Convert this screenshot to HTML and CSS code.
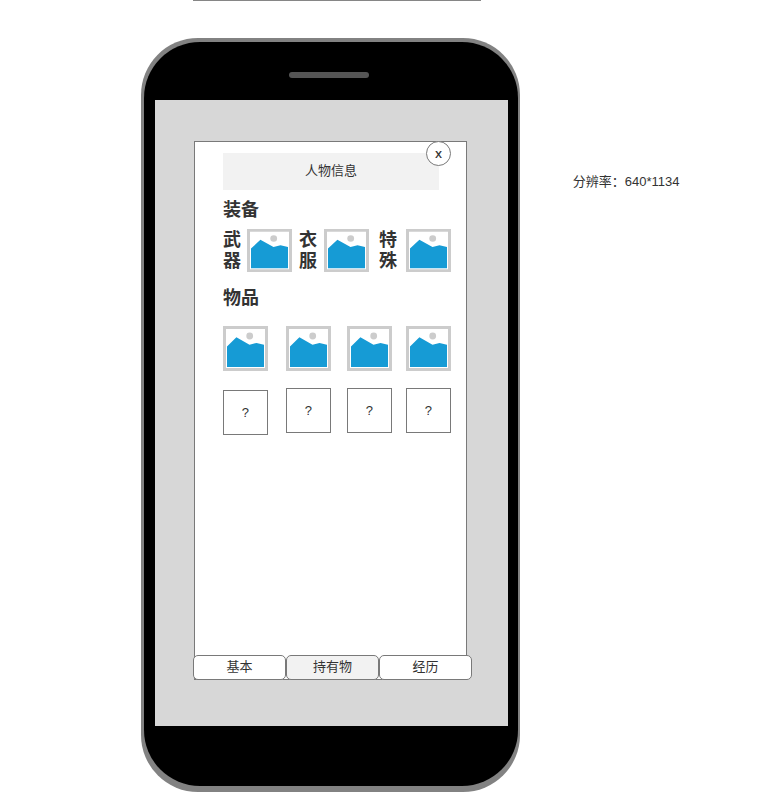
FILE: index.html
```html
<!DOCTYPE html>
<html lang="zh-CN">
<head>
<meta charset="utf-8">
<title>人物信息</title>
<link rel="stylesheet" href="styles.css">
</head>
<body>
<svg class="defs" aria-hidden="true">
  <symbol id="pic" viewBox="0 0 45 45" preserveAspectRatio="none">
    <path fill="#ccc" d="M0 0H45V45H0Z"/>
    <path fill="#fff" d="M3 3H42V42H3Z"/>
    <circle cx="26.7" cy="10" r="3.4" fill="#ccc"/>
    <path fill="#169bd5" d="M4 20.5L13.4 11.3L26.5 18.8L33.5 16.9L41 18.8V41H4Z"/>
  </symbol>
</svg>
<div class="previous"></div>
<main class="canvas">
  <div class="phone">
    <div class="body">
      <div class="speaker"></div>
      <div class="screen">
        <section class="panel">
          <button class="close">x</button>
          <header class="title">人物信息</header>
          <h2 class="heading">装备</h2>
          <div class="equipment">
            <h3 class="slot">武器</h3><svg class="pic"><use href="#pic"/></svg>
            <h3 class="slot">衣服</h3><svg class="pic"><use href="#pic"/></svg>
            <h3 class="slot">特殊</h3><svg class="pic"><use href="#pic"/></svg>
          </div>
          <h2 class="heading items-heading">物品</h2>
          <div class="items">
            <svg class="item"><use href="#pic"/></svg>
            <svg class="item"><use href="#pic"/></svg>
            <svg class="item"><use href="#pic"/></svg>
            <svg class="item"><use href="#pic"/></svg>
            <div class="item unknown first">?</div>
            <div class="item unknown">?</div>
            <div class="item unknown">?</div>
            <div class="item unknown">?</div>
          </div>
        </section>
        <nav class="tabs">
          <div class="tab">基本</div>
          <div class="tab active">持有物</div>
          <div class="tab">经历</div>
        </nav>
      </div>
    </div>
  </div>
  <p class="note">分辨率：640*1134</p>
</main>
</body>
</html>
```
FILE: styles.css
```css
* { box-sizing: border-box; }
body {
  margin: 0;
  height: 808px;
  overflow: hidden;
  background: #fff;
  color: #333;
  font: 13px/15px "Liberation Sans", "Noto Sans CJK SC", sans-serif;
}
h2, h3, p { margin: 0; }
.defs { position: absolute; width: 0; height: 0; }
.previous { width: 288px; height: 1px; margin-left: 193px; background: #868686; }
.canvas { display: flex; align-items: flex-start; padding: 36.6px 0 0 141px; }
.phone {
  width: 378.7px;
  height: 754.1px;
  padding: 4px 2px 5.6px 3px;
  border-radius: 57px;
  background: #828282;
}
.body {
  height: 100%;
  padding: 30.4px 10px 0 10.6px;
  border-radius: 56px;
  background: #000;
}
.speaker { width: 80px; height: 6px; margin: 0 0 22px 134.4px; border-radius: 3px; background: #555; }
.screen { height: 626px; padding: 41px 0 0 39.4px; background: #d7d7d7; }
.panel {
  position: relative;
  width: 273px;
  height: 539px;
  padding: 11px 15px 0 28px;
  border: 1px solid #797979;
  background: #fff;
}
.close {
  position: absolute;
  top: -1px;
  right: 15px;
  width: 25px;
  height: 25px;
  padding: 0;
  border: 1px solid #797979;
  border-radius: 50%;
  background: #fff;
  color: #333;
  font: 500 13px/23px "Noto Sans", sans-serif;
}
.title { width: 216px; height: 37px; background: #f2f2f2; line-height: 35px; text-align: center; }
.heading { height: 21px; margin-top: 9px; font-size: 18px; line-height: 23px; }
.equipment {
  display: grid;
  grid-template-columns: 24px 52px 25px 55px 27px 45px;
  height: 43px;
  margin-top: 9px;
}
.slot { width: 18px; padding-top: 1px; font-size: 18px; line-height: 21px; }
.pic { width: 45px; height: 43px; }
.items-heading { margin-top: 15px; }
.items {
  display: grid;
  grid-template-columns: 63px 61px 59px 45px;
  row-gap: 17px;
  margin-top: 18px;
}
.item { width: 45px; height: 45px; }
.unknown {
  border: 1px solid #797979;
  line-height: 43px;
  text-align: center;
}
.first { margin-top: 2px; }
.tabs { position: relative; display: flex; margin: -25px 0 0 -1px; }
.tab {
  width: 93px;
  height: 25px;
  border: 1px solid #797979;
  border-radius: 5px;
  background: #fff;
  line-height: 21px;
  text-align: center;
}
.active { background: #f2f2f2; }
.note { margin: 136.4px 0 0 53px; }
```
